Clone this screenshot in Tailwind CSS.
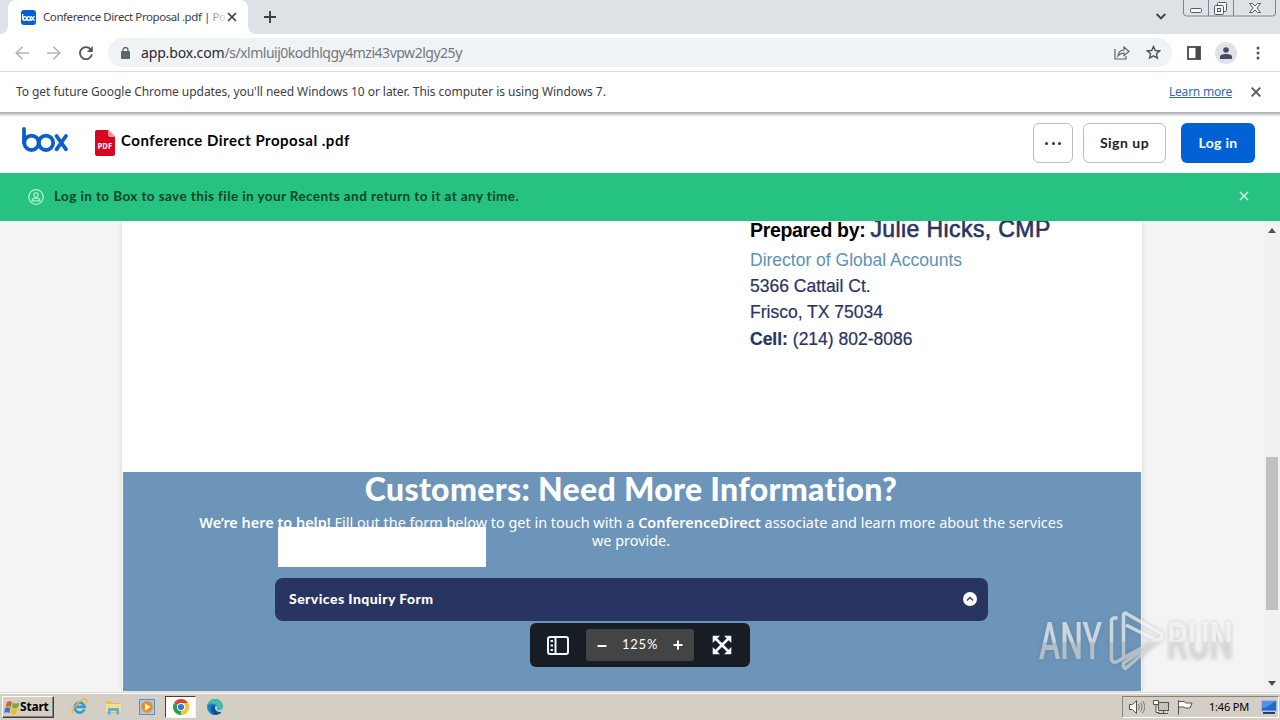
<!DOCTYPE html>
<html lang="en">
<head>
<meta charset="utf-8">
<title>Conference Direct Proposal .pdf | Powered by Box</title>
<script src="https://cdn.jsdelivr.net/npm/@tailwindcss/browser@4"></script>
</head>
<body class="w-[1280px] h-[720px] overflow-hidden flex flex-col bg-white font-['Noto_Sans',sans-serif] relative">

<!-- Tab strip -->
<div class="h-[34px] shrink-0 bg-[#dee1e6] flex items-start">
  <div class="w-2 h-[34px] bg-white"><div class="size-full bg-[#dee1e6] rounded-br-lg"></div></div>
  <div class="w-[240px] h-[34px] bg-white rounded-t-lg flex items-center">
    <div class="ml-[13px] size-[15px] rounded-[3px] bg-[#0061d5] flex items-center justify-center">
      <svg class="w-[13px] h-[7px]" viewBox="0 0 46 25" fill="none" stroke="#fff" stroke-width="5" stroke-linecap="round"><path d="M2 2v15"/><circle cx="9.500" cy="16" r="6.500"/><circle cx="24" cy="16" r="6.500"/><path d="M33 9.500l10 13M43 9.500l-10 13"/></svg>
    </div>
    <div class="ml-[7px] w-[177px] text-[11.5px] tracking-[-0.42px] whitespace-nowrap text-[#3c4043]">Conference Direct Proposal .pdf | <span class="text-transparent bg-linear-to-r from-[#85888b] to-[#e4e5e6] bg-clip-text">Po</span></div>
    <svg class="ml-[7px] size-[10px]" viewBox="0 0 10 10" stroke="#3c4043" stroke-width="1.700"><path d="M1 1l8 8M9 1l-8 8"/></svg>
  </div>
  <div class="w-2 h-[34px] bg-white"><div class="size-full bg-[#dee1e6] rounded-bl-lg"></div></div>
  <svg class="ml-[8px] mt-[11px] size-3" viewBox="0 0 12 12" stroke="#3c4043" stroke-width="1.900"><path d="M6 0v12M0 6h12"/></svg>
  <svg class="ml-[880px] mt-[13px] w-[10px] h-[7px]" viewBox="0 0 10 7" fill="none" stroke="#3c4043" stroke-width="1.900"><path d="M.7 1L5 5.300 9.300 1"/></svg>
  <svg class="ml-[17px] w-[93px] h-[17px]" viewBox="0 0 93 17" fill="none" stroke="#7f838c"><path d="M.5 0v13a3 3 0 0 0 3 3h86a3 3 0 0 0 3-3V0M25.500 0v16M50.500 0v16" /><g stroke="#555a64" fill="#f4f5f7"><rect x="7.500" y="8.500" width="11" height="4" rx="1"/><rect x="34.500" y="2.500" width="9" height="9" rx="1"/><rect x="31.500" y="5.500" width="9" height="9" rx="1"/><rect x="34.500" y="8.500" width="3" height="3"/><path d="M66.500 3.500h3l2.500 2.500 2.500-2.500h3l-3.500 4.500 3.500 4.500h-3l-2.500-2.500-2.500 2.500h-3l3.500-4.500z"/></g></svg>
</div>

<!-- Address bar -->
<div class="h-[38px] shrink-0 border-b border-[#d9dbde] flex items-center">
  <svg class="ml-[15px] w-[14px] h-[14px]" viewBox="0 0 14 14" fill="none" stroke="#b2b4b7" stroke-width="1.600"><path d="M14 7H1M7.500 .8L1.200 7l6.300 6.200"/></svg>
  <svg class="ml-[18px] w-[14px] h-[14px]" viewBox="0 0 14 14" fill="none" stroke="#b2b4b7" stroke-width="1.600"><path d="M0 7h13M6.500 .8L12.800 7l-6.300 6.200"/></svg>
  <svg class="ml-[18px] w-[14px] h-[14px]" viewBox="0 0 14 14" fill="none" stroke="#55595e" stroke-width="1.900"><path d="M12 3.800A6 6 0 1 0 12.900 8.400"/><path d="M13.800 0v6h-6z" fill="#55595e" stroke="none"/></svg>
  <div class="ml-[15px] w-[1064px] h-[29px] rounded-full bg-[#f0f3f5] flex items-center">
    <svg class="ml-[13px] w-[9px] h-3" viewBox="0 0 9 12"><rect y="4" width="9" height="8" rx="1" fill="#5f6368"/><path d="M2 5V3a2.500 2.500 0 0 1 5 0v2" fill="none" stroke="#5f6368" stroke-width="1.300"/></svg>
    <div class="ml-[11px] text-[14px] tracking-[-0.15px] text-[#27292c] whitespace-nowrap w-[973px]">app.box.com<span class="text-[#73777c] tracking-[-0.48px]">/s/xlmluij0kodhlqgy4mzi43vpw2lgy25y</span></div>
    <svg class="w-4 h-[14px]" viewBox="0 0 16 14" fill="none" stroke="#5f6368" stroke-width="1.200"><path d="M1 3v10h11v-3"/><path d="M4 10c.3-4 2.500-5.800 6-6V1l5 4.500-5 4V7C7.500 7 5.700 7.700 4 10z"/></svg>
    <svg class="ml-[16px] w-[15px] h-[15px]" viewBox="0 0 15 15" fill="none" stroke="#4d5156" stroke-width="1.400"><path d="M7.500 1.500l1.800 4 4.400.4-3.300 2.900 1 4.300-3.900-2.300-3.900 2.300 1-4.300L1.300 5.900l4.400-.4z"/></svg>
  </div>
  <svg class="ml-[15px] w-[14px] h-[14px]" viewBox="0 0 14 14"><rect x="1" y="1" width="12" height="12" fill="none" stroke="#46494d" stroke-width="1.800"/><path d="M8.500 1H13v12H8.500z" fill="#46494d"/></svg>
  <div class="ml-[14px] size-[22px] rounded-full bg-[#dfe2e7] flex items-center justify-center"><svg class="size-3" viewBox="0 0 12 12" fill="#474c66"><circle cx="6" cy="3" r="2.800"/><path d="M0 12V9.800C0 7.800 3 7 6 7s6 .8 6 2.800V12z"/></svg></div>
  <svg class="ml-[19px] w-1 h-[14px]" viewBox="0 0 4 14" fill="#4d5156"><circle cx="2" cy="2" r="1.500"/><circle cx="2" cy="7" r="1.500"/><circle cx="2" cy="12" r="1.500"/></svg>
</div>

<!-- Update notice -->
<div class="h-[40px] shrink-0 flex items-center text-[12px] text-[#3c4043]">
  <div class="ml-4 w-[1153px] tracking-[-0.055px] whitespace-nowrap">To get future Google Chrome updates, you'll need Windows 10 or later. This computer is using Windows 7.</div>
  <div class="w-[63px] tracking-[-0.22px] text-[#3367b5] underline whitespace-nowrap">Learn more</div>
  <svg class="ml-[19px] size-[10px]" viewBox="0 0 10 10" stroke="#55595e" stroke-width="1.900"><path d="M.7 .7l8.600 8.600M9.300 .7L.7 9.300"/></svg>
</div>
<div class="h-[5px] shrink-0 bg-linear-to-b from-[#a4a8a9] via-[#d3d3d5] to-white"></div>

<!-- Box header -->
<div class="h-[56px] shrink-0 flex font-['Lato',sans-serif] font-bold">
  <svg class="ml-[22px] mt-[10px] w-[47px] h-[25px]" viewBox="0 0 47 25" fill="none" stroke="#0b5fc9" stroke-width="3.800" stroke-linecap="round"><path d="M2 2v14"/><circle cx="9.500" cy="15.800" r="7.200"/><circle cx="24" cy="15.800" r="7.200"/><path d="M34.500 9l9.500 13.300M44 9L34.500 22.300"/></svg>
  <svg class="ml-[26px] mt-[13px] w-5 h-[26px]" viewBox="0 0 20 26"><path d="M2 0h11l7 7v17a2 2 0 0 1-2 2H2a2 2 0 0 1-2-2V2a2 2 0 0 1 2-2z" fill="#d80621"/><path d="M13 0l7 7h-5a2 2 0 0 1-2-2z" fill="#f38a98"/><text x="2.600" y="18.500" textLength="14.500" lengthAdjust="spacingAndGlyphs" fill="#fff" font-family="Open Sans" font-weight="700" font-size="9.500">PDF</text></svg>
  <div class="ml-[6px] mt-[11px] w-[912px] text-[15px] leading-6 tracking-[0.5px] text-black whitespace-nowrap">Conference Direct Proposal .pdf</div>
  <div class="mt-[6px] w-10 h-10 rounded-md border border-[#bcbcbc] flex items-center justify-center gap-[3.500px]"><i class="size-[3px] rounded-full bg-[#333]"></i><i class="size-[3px] rounded-full bg-[#333]"></i><i class="size-[3px] rounded-full bg-[#333]"></i></div>
  <div class="ml-[10px] mt-[6px] w-[83px] h-10 rounded-md border border-[#bcbcbc] text-[14px] tracking-[0.5px] text-[#222] flex items-center justify-center whitespace-nowrap pb-[2px]">Sign up</div>
  <div class="ml-[15px] mt-[6px] w-[74px] h-10 rounded-md bg-[#0061d5] text-[14px] tracking-[0.35px] text-white flex items-center justify-center whitespace-nowrap pb-[2px]">Log in</div>
</div>

<!-- Login banner -->
<div class="h-12 shrink-0 bg-[#26c281] flex items-center font-['Lato',sans-serif] pb-[2px]">
  <svg class="ml-[28px] mt-[2px] size-4" viewBox="0 0 16 16" fill="none" stroke="#b5f0d3" stroke-width="1.200"><circle cx="8" cy="8" r="7.300"/><circle cx="8" cy="6" r="2.200"/><path d="M4 11.800c0-2.400 1.500-2.600 4-2.600s4 .2 4 2.600z"/></svg>
  <div class="ml-[10px] w-[1185px] text-[13.500px] font-bold tracking-[0.41px] text-[#0b4528] whitespace-nowrap">Log in to Box to save this file in your Recents and return to it at any time.</div>
  <svg class="size-[10px]" viewBox="0 0 10 10" stroke="#d9f8e9" stroke-width="1.400"><path d="M1 1l8 8M9 1L1 9"/></svg>
</div>

<!-- Document viewer -->
<div class="h-[471px] shrink-0 bg-[#f4f4f4] flex relative overflow-hidden">
  <div class="ml-[122px] w-[1020px] h-[470px] bg-white shadow-[0_0_4px_rgba(0,0,0,0.15)] flex flex-col">
    <div class="h-[251px] shrink-0 pl-[628px] font-['Liberation_Sans',sans-serif] text-[#2a3362] text-[17.500px] whitespace-nowrap">
      <div class="h-[25px] -mt-[4px] leading-[25px] text-[23px] [-webkit-text-stroke:0.600px_#2a3362]"><span class="text-[19.500px] font-bold text-black [-webkit-text-stroke:0] tracking-[-0.32px]">Prepared by: </span><span class="tracking-[0.4px]">Julie Hicks, CMP</span></div>
      <div class="mt-[5px] h-[26px] leading-[26px] text-[#5b93b8]">Director of Global Accounts</div>
      <div class="h-[26px] leading-[26px] [-webkit-text-stroke:0.200px_#2a3362]">5366 Cattail Ct.</div>
      <div class="h-[27px] leading-[26px] [-webkit-text-stroke:0.200px_#2a3362]">Frisco, TX 75034</div>
      <div class="h-[26px] leading-[26px] [-webkit-text-stroke:0.200px_#2a3362]"><b>Cell:</b> (214) 802-8086</div>
    </div>
    <div class="mx-px h-[219px] bg-[#6c95b9] text-white relative">
      <div class="h-[36px] text-center font-['Lato',sans-serif] font-black text-[32px] leading-[34px] tracking-[0.3px] pr-[2px] whitespace-nowrap">Customers: Need More Information?</div>
      <div class="mt-[6px] ml-[58px] w-[900px] text-center text-[14.450px] leading-[18px] whitespace-nowrap"><b class="font-semibold">We’re here to help!</b> Fill out the form below to get in touch with a <b class="font-semibold">ConferenceDirect</b> associate and learn more about the services<br>we provide.</div>
      <div class="absolute left-[155px] top-[55px] w-[208px] h-10 bg-white"></div>
      <div class="mt-[28px] ml-[151.5px] w-[713.5px] h-[42.500px] rounded-lg bg-[#283462] flex items-center justify-between pl-[14.5px] pr-[11px]">
        <div class="font-['Lato',sans-serif] font-black text-[14px] tracking-[0.45px] pb-px">Services Inquiry Form</div>
        <svg class="size-[14px]" viewBox="0 0 14 14"><circle cx="7" cy="7" r="7" fill="#fff"/><path d="M4 8.500l3-3 3 3" fill="none" stroke="#283462" stroke-width="1.300"/></svg>
      </div>
    </div>
  </div>
  <!-- Scrollbar -->
  <div class="ml-auto w-4 h-[471px] bg-[#f1f1f1] flex flex-col items-center">
    <svg class="mt-[7px] w-2 h-[5px]" viewBox="0 0 8 5"><path d="M0 5l4-5 4 5z" fill="#505050"/></svg>
    <div class="mt-[224px] w-3 h-[153px] bg-[#c1c1c1]"></div>
    <svg class="mt-[71px] w-2 h-[5px]" viewBox="0 0 8 5"><path d="M0 0l4 5 4-5z" fill="#505050"/></svg>
  </div>
  <!-- Viewer controls -->
  <div class="absolute left-[530px] top-[402px] w-[220px] h-[44px] rounded-md bg-[#171d22] flex items-center">
    <svg class="ml-[17px] w-[22px] h-[19px]" viewBox="0 0 22 19" fill="none" stroke="#eef6fa" stroke-width="2"><rect x="1" y="1" width="20" height="17" rx="2"/><path d="M8.500 1v17"/><path d="M3.500 5h2.500M3.500 9.500h2.500M3.500 14h2.500" stroke-width="2"/></svg>
    <div class="ml-[17px] w-[108px] h-8 rounded-[3px] bg-[#424445] flex items-center text-white">
      <svg class="ml-[11px] mt-px w-[10px] h-[2px]" viewBox="0 0 10 2"><path d="M.5 0h9v2h-9z" fill="#fff"/></svg>
      <div class="w-[66px] text-center font-['Lato',sans-serif] text-[13px] tracking-[0.8px] pb-px">125%</div>
      <svg class="size-[10px]" viewBox="0 0 10 10" stroke="#fff" stroke-width="2"><path d="M5 .5v9M.5 5h9"/></svg>
    </div>
    <svg class="ml-[18px] size-5" viewBox="0 0 20 20" fill="#f2f8fb"><path d="M3 3l14 14M17 3L3 17" stroke="#f2f8fb" stroke-width="2.600"/><path d="M.7 .7h7.300L.7 8zM19.300 .7v7.300l-7.300-7.300zM.7 19.300v-7.300l7.300 7.300zM19.300 19.300h-7.300l7.300-7.300z"/></svg>
  </div>
</div>

<!-- Taskbar -->
<div class="h-7 shrink-0 bg-[#d4cec5] border-t border-[#dedad3] shadow-[inset_0_1px_0_#fff] flex items-center">
  <div class="ml-[2px] mt-px w-[52px] h-[22px] border border-t-white border-l-white border-r-[#404040] border-b-[#404040] shadow-[inset_-1px_-1px_0_#87827b] flex items-center">
    <svg class="ml-px w-4 h-[15px]" viewBox="0 0 16 15"><path d="M3 2c2-1.300 3.500-1 5 0L6.800 7C5 6 3.500 6 1.500 7z" fill="#dd5b26"/><path d="M9 2.500c2 1.200 4 1.200 6.500 0L14 7.500c-2 1.200-4 1.200-6.200 0z" fill="#79ad31"/><path d="M1.200 8c2-1.200 3.700-1 5.300 0l-1.300 5C3.500 12 2 12 0 13z" fill="#3a78c5"/><path d="M7.500 8.500c2 1.200 4 1.200 6.200 0l-1.300 5c-2 1.200-4.200 1-6.200 0z" fill="#f2b92b"/></svg>
    <div class="text-[12px] font-bold tracking-[-0.2px] text-black leading-4">Start</div>
  </div>
  <svg class="ml-[17px] w-[17px] h-[17px]" viewBox="0 0 17 17" fill="none"><path d="M13.300 11.500A5 5 0 1 1 13.600 8.800H5" stroke="#339bd3" stroke-width="2.700"/><path d="M2 15.500C-2 12 12-1 15.500 1.500c1 .7.300 2-.5 3.500" stroke="#e7b83f" stroke-width="1.400"/></svg>
  <svg class="ml-[17px] w-[17px] h-[16px]" viewBox="0 0 17 16"><path d="M1 2h5l1 2h8v10H1z" fill="#e0bf5c"/><path d="M1 5h15v8H1z" fill="#f3dd90"/><path d="M3 15.500V9h11v6.500h-2.500v-3.500h-6v3.500z" fill="#5fafdb"/></svg>
  <svg class="ml-[17px] w-4 h-4" viewBox="0 0 16 16"><rect x=".5" y=".5" width="15" height="15" fill="#a8c7e3" stroke="#5b90c2"/><circle cx="8" cy="8" r="5.800" fill="#f18b1c"/><path d="M6 4.500v7L11.500 8z" fill="#fff"/></svg>
  <div class="ml-[10px] w-[31px] h-[22px] bg-white border border-t-[#404040] border-l-[#404040] border-r-[#f5f3ef] border-b-[#f5f3ef] flex items-center justify-center">
    <svg class="size-4" viewBox="0 0 16 16"><path d="M8 8L1.070 4A8 8 0 0 1 14.930 4z" fill="#df4032"/><path d="M8 8l6.930-4A8 8 0 0 1 8 16z" fill="#f8c72b"/><path d="M8 8v8A8 8 0 0 1 1.070 4z" fill="#2d9f4f"/><path d="M8 4h6.930A8 8 0 0 1 8 16l3.500-6z" fill="#f8c72b"/><circle cx="8" cy="8" r="4" fill="#fff"/><circle cx="8" cy="8" r="3.100" fill="#3475df"/></svg>
  </div>
  <svg class="ml-[11px] size-4" viewBox="0 0 16 16"><path d="M8 0a8 8 0 1 0 6.500 12.800C11 14 7.500 11.500 8 8.500c.3-1.500 2-2 2.500-.5.200 1-.8 1.500-.5 2.500.8 1.300 6 .8 6-3.500A8 8 0 0 0 8 0z" fill="#1a7fcf"/><path d="M.5 6C2 1.500 5 0 8 0a8 8 0 0 1 8 7c0 4.300-5.200 4.800-6 3.500-.3-1 .7-1.500.5-2.500C9.800 4.500 4 3 .5 6z" fill="#41bfa8"/><path d="M5 7c-2.500 3-.5 8 4 8.900 2.300 0 4.300-1.300 5.500-3.100C11 14 7.500 11.500 8 8.500 8 7 6.500 6 5 7z" fill="#12509b"/></svg>
  <div class="ml-auto mr-[1px] mt-px w-[157px] h-[22px] border border-t-[#87827b] border-l-[#87827b] border-r-white border-b-white flex items-center">
    <svg class="ml-[6px] w-4 h-4" viewBox="0 0 16 16" fill="#fff" stroke="#55524e"><path d="M.5 5.500h3l4-4v13l-4-4h-3z"/><path d="M9.500 5c1 2 1 4 0 6M11.500 3.500c2 3 2 6 0 9M13.500 2c3 4 3 8 0 12" fill="none" stroke="#77736e"/></svg>
    <svg class="ml-[8px] w-4 h-4" viewBox="0 0 16 16" fill="#fff" stroke="#55524e"><rect x="5.500" y="3.500" width="10" height="8" fill="#c5c3bf"/><path d="M5 14.500h10M10.500 12v2"/><path d="M.5 1.500h5v4h-5zM3 5.500v8h3"/></svg>
    <svg class="ml-[8px] w-4 h-4" viewBox="0 0 16 16" fill="#fff" stroke="#55524e"><path d="M1.500 1v14.500"/><path d="M1.500 2.500h6l1 1.500h6.500l-2 5h-5L7 8H1.500z"/></svg>
    <div class="ml-[16px] w-[41px] text-[11px] tracking-[-0.2px] text-black whitespace-nowrap">1:46 PM</div>
    <svg class="ml-[11px] w-[16px] h-[14px]" viewBox="0 0 16 14"><rect x=".5" y=".5" width="15" height="10.500" fill="#2368c4" stroke="#9dbce3"/><path d="M1 1h14L4 8H1z" fill="#4f93e2"/><path d="M2 13h12" stroke="#243d6b" stroke-width="2"/></svg>
  </div>
</div>

<!-- Recorder watermark -->
<svg class="absolute left-[1034px] top-[606px] w-[204px] h-[70px] drop-shadow-[0_0_2px_rgba(90,90,90,0.45)]" viewBox="0 0 204 70" fill="none">
  <defs><linearGradient id="wm" x1="0" y1="10" x2="0" y2="60" gradientUnits="userSpaceOnUse"><stop offset=".5" stop-color="#fff" stop-opacity=".65"/><stop offset=".54" stop-color="#dcdcdc" stop-opacity=".65"/></linearGradient></defs>
  <g fill="url(#wm)" font-family="Roboto" font-weight="500" font-size="51"><text x="5" y="53" textLength="63" lengthAdjust="spacingAndGlyphs">ANY</text><text x="133" y="53" textLength="66" lengthAdjust="spacingAndGlyphs">RUN</text></g>
  <path d="M83.500 12h-4l-2 2v40l2 2h3l39-22M89.500 51V8.500l2-1.500 36.500 21v3.500l-36.500 31-2-1.500v-4l38-25.500M92 19l32 16" stroke="url(#wm)" stroke-width="3.600" stroke-linejoin="round"/>
</svg>
</body>
</html>
